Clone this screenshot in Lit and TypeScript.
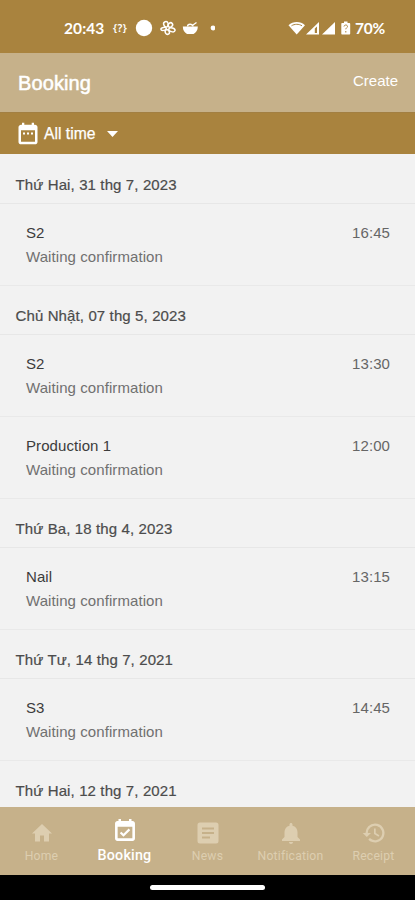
import { LitElement, html, css, svg } from "lit";
import { customElement } from "lit/decorators.js";
import { classMap } from "lit/directives/class-map.js";

interface Booking { name: string; time: string; }
interface Day { date: string; bookings: Booking[]; }

const days: Day[] = [
  { date: "Thứ Hai, 31 thg 7, 2023", bookings: [{ name: "S2", time: "16:45" }] },
  { date: "Chủ Nhật, 07 thg 5, 2023", bookings: [{ name: "S2", time: "13:30" }, { name: "Production 1", time: "12:00" }] },
  { date: "Thứ Ba, 18 thg 4, 2023", bookings: [{ name: "Nail", time: "13:15" }] },
  { date: "Thứ Tư, 14 thg 7, 2021", bookings: [{ name: "S3", time: "14:45" }] },
  { date: "Thứ Hai, 12 thg 7, 2021", bookings: [] },
];

const icons = {
  home: svg`<path d="M10 20.500v-6h4v6h5v-8h3L12 3 2 12.500h3v8z"/>`,
  booking: svg`<path d="M16.800 11.200L15.400 9.800l-4.800 4.800-2-2-1.400 1.400 3.400 3.400zM19 2.800h-1V1h-2.300v1.800H8.300V1H6v1.800H5c-1.110 0-2.200.9-2.200 2.200v14c0 1.200.99 2.200 2.200 2.200h14c1.200 0 2.200-1 2.200-2.200V5c0-1.200-1-2.200-2.200-2.200zM18.800 18.800H5.200V8h13.600z"/>`,
  news: svg`<path d="M20 1.500H4A2.500 2.500 0 0 0 1.500 4v16A2.500 2.500 0 0 0 4 22.500h16a2.500 2.500 0 0 0 2.500-2.500V4A2.500 2.500 0 0 0 20 1.500zm-6 16H6v-2h8v2zm4-4.500H6v-2h12v2zm0-4.500H6v-2h12v2z"/>`,
  bell: svg`<path d="M12 23c1.100 0 2-.9 2-2h-4c0 1.100.89 2 2 2zm6.500-7v-5c0-3.070-1.900-5.640-5-6.320V3.500c0-.83-.67-1.500-1.500-1.500s-1.500.67-1.500 1.500v1.180C7.400 5.360 5.500 7.920 5.500 11v5L3 18.500V20h18v-1.500L18.500 16z"/>`,
  history: svg`<path d="M13 2.500a9.500 9.500 0 0 0-9.500 9.500H.7l4.100 4.100L9 12H5.800a7.200 7.200 0 1 1 2.100 5.100l-1.600 1.600A9.500 9.500 0 1 0 13 2.500zM12 7.500V13l4.500 2.700.9-1.400-3.700-2.200V7.500z"/>`,
};

const tabs = [
  { label: "Home", icon: icons.home },
  { label: "Booking", icon: icons.booking, active: true },
  { label: "News", icon: icons.news },
  { label: "Notification", icon: icons.bell },
  { label: "Receipt", icon: icons.history },
];

@customElement("status-bar")
class StatusBar extends LitElement {
  static styles = css`
    :host { display: flex; align-items: center; height: 53px; padding: 3px 26px 0 64px; box-sizing: border-box;
      background: #a9833e; color: #fff; }
    .clock { width: 49px; font: 700 15.500px Lato, sans-serif; letter-spacing: 0.1px; }
    .code { width: 22px; font: 600 10.500px "Noto Sans", sans-serif; letter-spacing: 0.4px; }
    svg { display: block; fill: #fff; }
    .grow { flex: 1; }
    .level { font: 700 15.500px Lato, sans-serif; width: 34px; margin-left: 1px; letter-spacing: -0.2px; }
  `;
  render() {
    return html`
      <span class="clock">20:43</span><span class="code">{?}</span>
      <svg width="80" height="18" viewBox="0 0 80 18">
        <circle cx="9" cy="9" r="8.200"/>
        <g fill="none" stroke="#fff" stroke-width="1.500">
          <ellipse cx="31" cy="5.300" rx="2.300" ry="2.700" transform="rotate(-20 31 5.300)"/>
          <ellipse cx="35.300" cy="6" rx="2.500" ry="2" transform="rotate(-40 35.300 6)"/>
          <ellipse cx="36.900" cy="10.800" rx="3.200" ry="1.900" transform="rotate(15 36.900 10.800)"/>
          <ellipse cx="32.300" cy="13" rx="2" ry="2.400" transform="rotate(-30 32.300 13)"/>
          <ellipse cx="28.600" cy="9.900" rx="2.700" ry="1.500" transform="rotate(-10 28.600 9.900)"/>
        </g>
        <path d="M47.800 7.500h15c0 4-2 6-4.200 7.500h-6.600c-2.200-1.500-4.200-3.500-4.200-7.500z"/>
        <path d="M52.500 7.500c0-3 5-3 5.500 0M58 6l3.500-2.500" fill="none" stroke="#fff" stroke-width="1.300"/>
        <circle cx="78" cy="9" r="2.400"/>
      </svg>
      <span class="grow"></span>
      <svg width="66" height="18" viewBox="0 0 66 18">
        <path d="M.5 6.200C5 2 12.500 2 17 6.200L8.700 15.500z"/>
        <path d="M3.500 6.800c3-2 7.500-2 10.500 0" fill="none" stroke="#a9833e" stroke-width="1"/>
        <path d="M18 15.500L31 3v12.500zM26.800 9.500v4.500h2.200V7.500z" fill-rule="evenodd"/>
        <path d="M34 15.500L47 3v12.500z"/>
        <path d="M56 2.500h3.500V4h1.700c.6 0 1 .4 1 1v9.500c0 .6-.4 1-1 1h-6.900c-.6 0-1-.4-1-1V5c0-.6.400-1 1-1H56z"/>
        <path d="M56 7.500c.2-2 3.500-2 3.500 0 0 1.300-1.700 1.300-1.700 2.800M57.800 12v1.500" fill="none" stroke="#a9833e" stroke-width="1"/>
      </svg>
      <span class="level">70%</span>`;
  }
}

@customElement("app-root")
class AppRoot extends LitElement {
  static styles = css`
    :host { display: flex; flex-direction: column; height: 900px; overflow: hidden; background: #f2f2f2;
      font-family: "Liberation Sans", Arial, sans-serif; color: #444; }
    header { flex: none; height: 59px; box-sizing: border-box; padding: 0 17px 0 18px; display: flex; align-items: center;
      justify-content: space-between; background: #c6b18a; color: #fff; }
    h1 { margin: 2px 0 0; font-size: 20px; font-weight: 400; letter-spacing: 0.1px; -webkit-text-stroke: 0.5px #fff; }
    .create { font-size: 15px; margin-top: -4px; }
    .filter { flex: none; height: 42px; box-sizing: border-box; display: flex; align-items: center; padding-left: 16px;
      background: #a9833e; color: #fff; font-size: 15.700px; -webkit-text-stroke: 0.25px #fff;
      border-top: 1px solid #a27f42; }
    .filter svg { fill: #fff; display: block; }
    .filter span { margin: 1px 12px 0 4px; }
    .list { flex: 1; min-height: 0; overflow: hidden; padding-top: 1px; }
    .date { height: 49px; box-sizing: border-box; display: flex; align-items: center; padding: 11px 16px 0 15.500px;
      font-size: 15px; letter-spacing: 0.12px; color: #4c4c4c; -webkit-text-stroke: 0.2px #4c4c4c; border-bottom: 1px solid #e7e7e7; }
    .item { height: 82px; box-sizing: border-box; display: grid; grid-template-columns: 1fr auto;
      grid-template-rows: 24px 24px; padding: 17px 25px 0 26px; line-height: 24px; font-size: 15px; letter-spacing: 0.08px;
      border-bottom: 1px solid #e9e9e9; }
    .name { color: #3c3c3c; }
    .time { color: #666; }
    .state { color: #707070; }
    nav { flex: none; height: 68px; display: grid; grid-template-columns: repeat(5, 1fr); background: #c6b18a; }
    .tab { display: flex; flex-direction: column; align-items: center; padding-top: 14px; color: #ddceb0;
      font: 400 12.200px/17px Roboto, sans-serif; letter-spacing: 0.2px; }
    .tab svg { width: 24px; height: 24px; fill: currentColor; }
    .tab span { margin-top: 3px; }
    .active { color: #fff; font-size: 14.300px; font-weight: 500; padding-top: 11px; }
    .active svg { width: 26px; height: 26px; }
    .gesture { flex: none; height: 25px; display: flex; justify-content: center; background: #000; }
    .pill { width: 115px; height: 5px; margin-top: 10px; border-radius: 3px; background: #fff; }
  `;

  render() {
    return html`
      <status-bar></status-bar>
      <header><h1>Booking</h1><span class="create">Create</span></header>
      <div class="filter">
        <svg width="24" height="26" viewBox="0 0 24 24" preserveAspectRatio="none"><path d="M19 3.500h-1V1.500h-2.300v2H8.300v-2H6v2H5c-1.110 0-2.500.9-2.500 2.200v13.600c0 1.200 1.200 2.200 2.500 2.200h14c1.300 0 2.500-.9 2.500-2.200V5.700c0-1.200-1.200-2.200-2.500-2.200zm0 15.700H5V8.500h14zM7 10.500h2v2H7zm4 0h2v2h-2zm4 0h2v2h-2z"/></svg>
        <span>All time</span>
        <svg width="11" height="6" viewBox="0 0 11 6"><path d="M0 0h11L5.500 6z"/></svg>
      </div>
      <div class="list">
        ${days.map((d) => html`
          <div class="date">${d.date}</div>
          ${d.bookings.map((b) => html`
            <div class="item">
              <span class="name">${b.name}</span><span class="time">${b.time}</span>
              <span class="state">Waiting confirmation</span>
            </div>`)}`)}
      </div>
      <nav>
        ${tabs.map((t) => html`
          <div class=${classMap({ tab: true, active: !!t.active })}>
            <svg viewBox="0 0 24 24">${t.icon}</svg><span>${t.label}</span>
          </div>`)}
      </nav>
      <div class="gesture"><div class="pill"></div></div>`;
  }
}
